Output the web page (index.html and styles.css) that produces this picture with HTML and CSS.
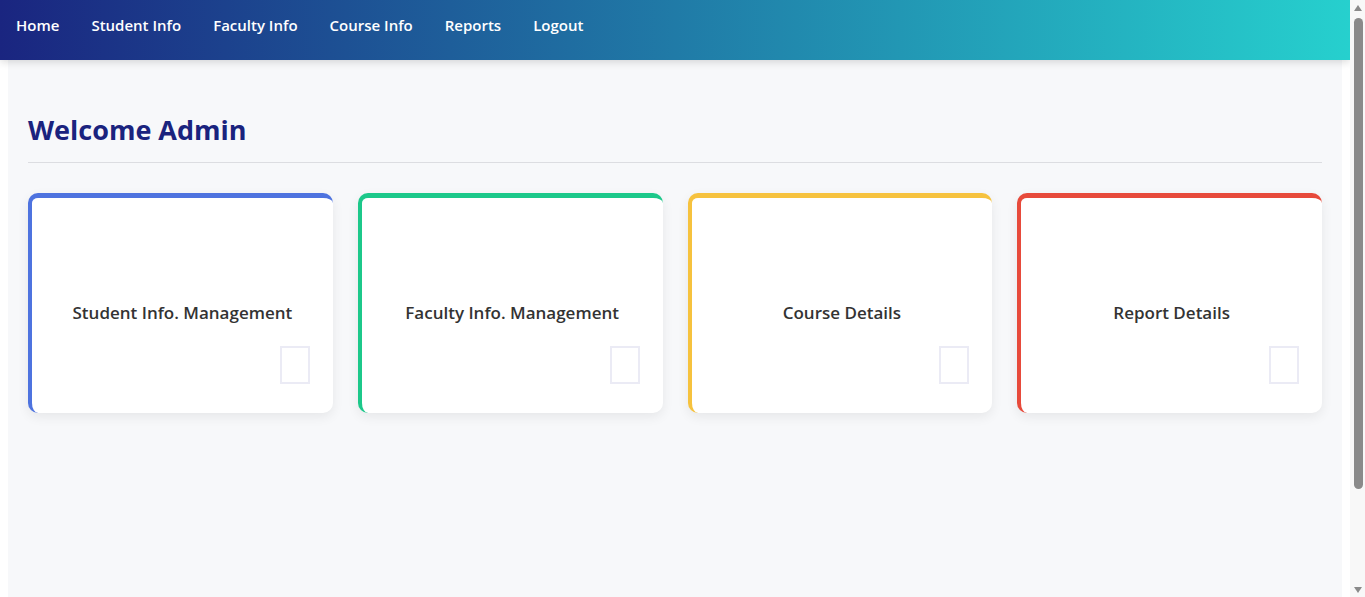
FILE: index.html
```html
<!DOCTYPE html>
<html lang="en">
<head>
<meta charset="utf-8">
<title>Admin Dashboard</title>
<link rel="stylesheet" href="styles.css">
</head>
<body>
<nav class="navbar">
  <a class="nav-link" href="#">Home</a>
  <a class="nav-link" href="#">Student Info</a>
  <a class="nav-link" href="#">Faculty Info</a>
  <a class="nav-link" href="#">Course Info</a>
  <a class="nav-link" href="#">Reports</a>
  <a class="nav-link" href="#">Logout</a>
</nav>
<main class="main">
  <h1 class="welcome">Welcome Admin</h1>
  <div class="cards">
    <div class="card card-blue">
      <h3 class="card-title">Student Info. Management</h3>
      <span class="card-icon"></span>
    </div>
    <div class="card card-green">
      <h3 class="card-title">Faculty Info. Management</h3>
      <span class="card-icon"></span>
    </div>
    <div class="card card-yellow">
      <h3 class="card-title">Course Details</h3>
      <span class="card-icon"></span>
    </div>
    <div class="card card-red">
      <h3 class="card-title">Report Details</h3>
      <span class="card-icon"></span>
    </div>
  </div>
</main>
<div class="scrollbar" aria-hidden="true">
  <span class="sb-arrow sb-up"></span>
  <span class="sb-thumb"></span>
  <span class="sb-arrow sb-down"></span>
</div>
</body>
</html>
```
FILE: styles.css
```css
* { box-sizing: border-box; }
html, body { margin: 0; padding: 0; }
body {
  font-family: "Open Sans", "Noto Sans", sans-serif;
  background: #ffffff;
  margin-right: 15px;
}
.navbar {
  height: 60px;
  display: flex;
  align-items: center;
  background: linear-gradient(to right, #1a2580, #26d0ce);
  box-shadow: 0 2px 8px rgba(0,0,0,0.15);
  position: relative;
  z-index: 2;
}
.nav-link {
  color: #ffffff;
  text-decoration: none;
  font-size: 15px;
  font-weight: 600;
  padding: 0 16px;
  margin-top: -10px;
}
.main {
  margin: 0 8px;
  background: #f7f8fa;
  min-height: 657px;
  padding: 51px 20px 30px;
}
.welcome {
  margin: 0;
  font-size: 27px;
  font-weight: 700;
  color: #1a237e;
  padding-bottom: 14px;
  border-bottom: 1px solid #dcdde1;
}
.cards {
  margin-top: 30px;
  display: grid;
  grid-template-columns: repeat(4, 1fr);
  gap: 25px;
}
.card {
  height: 220px;
  background: #fff;
  border-radius: 10px;
  border-top: 5px solid;
  border-left: 4px solid;
  box-shadow: 0 4px 12px rgba(0,0,0,0.07);
  display: flex;
  flex-direction: column;
  justify-content: flex-end;
  align-items: center;
  padding: 0 23px 29px;
}
.card-blue { border-color: #4e73df; }
.card-green { border-color: #1cc88a; }
.card-yellow { border-color: #f6c23e; }
.card-red { border-color: #e74a3b; }
.card-title {
  margin: 0 0 21px;
  font-size: 17px;
  line-height: 24px;
  font-weight: 600;
  color: #333333;
}
.card-icon {
  align-self: flex-end;
  width: 30px;
  height: 38px;
  border: 2px solid #ebebf5;
}

/* emulated browser scrollbar */
.scrollbar {
  position: fixed;
  top: 0;
  right: 0;
  width: 15px;
  height: 100vh;
  background: #f8f8f8;
  display: flex;
  flex-direction: column;
  align-items: center;
  padding: 5px 0 4px 1px;
}
.sb-arrow {
  width: 0;
  height: 0;
  border-left: 4.5px solid transparent;
  border-right: 4.5px solid transparent;
}
.sb-up { border-bottom: 6px solid #8a8a8a; }
.sb-down { border-top: 6px solid #8a8a8a; margin-top: auto; }
.sb-thumb {
  margin-top: 7px;
  width: 9px;
  height: 471px;
  border-radius: 5px;
  background: #8a8a8a;
}
```
